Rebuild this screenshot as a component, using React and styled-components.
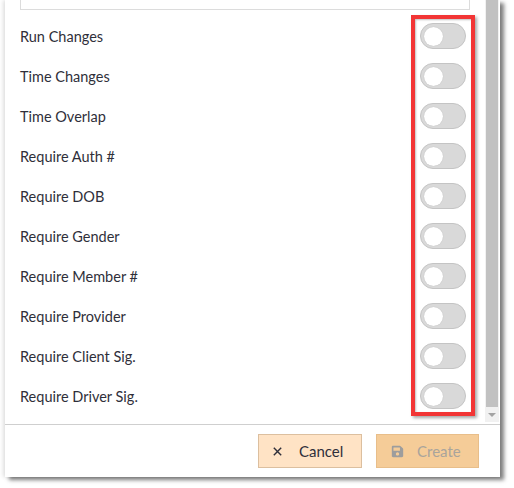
import React from "react";
import styled, { createGlobalStyle } from "styled-components";
import { FaSave } from "react-icons/fa";

const Global = createGlobalStyle`
  html, body { margin: 0; padding: 0; background: #fff; }
  body { font-family: Lato, "Noto Sans", sans-serif; }
`;

const Page = styled.div`
  width: 514px;
  height: 488px;
  padding: 0 14px 11px 5px;
  box-sizing: border-box;
  overflow: hidden;
`;

const Dialog = styled.div`
  position: relative;
  height: 477px;
  background: #fff;
  display: flex;
  flex-direction: column;
  box-shadow: 4px 3px 4px rgba(0, 0, 0, 0.5), -2px 0 4px rgba(0, 0, 0, 0.12);
`;

const Body = styled.div`
  display: flex;
  height: 424px;
  padding-right: 1px;
`;

const List = styled.div`
  flex: 1;
  display: flex;
  flex-direction: column;
`;

const CutInput = styled.div`
  height: 9px;
  margin: 0 15px 6px 15px;
  border: 1px solid #dcdcdc;
  border-top: none;
`;

const Row = styled.div`
  height: 40px;
  display: flex;
  align-items: center;
  justify-content: space-between;
  padding: 0 19px 0 15px;
  font-size: 14.5px;
  color: #2f2f3a;
`;

const Toggle = styled.div`
  width: 46px;
  height: 26px;
  box-sizing: border-box;
  border-radius: 13px;
  background: #d9d9d9;
  border: 1px solid #c4c4c4;
  display: flex;
  align-items: center;
  padding-left: 3px;
`;

const Knob = styled.div`
  width: 19px;
  height: 19px;
  border-radius: 50%;
  background: #fff;
  box-shadow: 0 0 1px rgba(0, 0, 0, 0.2);
`;

const Scrollbar = styled.div`
  width: 14px;
  height: 422px;
  background: #f1f1f1;
  display: flex;
  flex-direction: column;
  align-items: center;
`;

const Thumb = styled.div`
  width: 12px;
  height: 407px;
  background: #c1c1c1;
`;

const Arrow = styled.div`
  margin-top: 6px;
  width: 0;
  height: 0;
  border-left: 4px solid transparent;
  border-right: 4px solid transparent;
  border-top: 4px solid #a3a3a3;
`;

const Footer = styled.div`
  flex: 1;
  border-top: 1px solid #cfcfcf;
  display: flex;
  align-items: center;
  justify-content: flex-end;
  gap: 14px;
  padding: 0 21px 0 0;
`;

const Button = styled.button`
  height: 34px;
  width: ${(p) => p.$w}px;
  box-sizing: border-box;
  display: flex;
  align-items: center;
  justify-content: flex-start;
  gap: ${(p) => p.$gap}px;
  padding: 0 0 0 14px;
  font-family: Lato, "Noto Sans", sans-serif;
  font-size: 15px;
  border: 1px solid ${(p) => (p.$disabled ? "#e8be8a" : "#dcbf9f")};
  background: ${(p) => (p.$disabled ? "#f5cc98" : "#ffe3c5")};
  color: ${(p) => (p.$disabled ? "#a9a49c" : "#2f2f3a")};
`;

const XIcon = () => (
  <svg width="9" height="9" viewBox="0 0 9 9">
    <path d="M0.8 0.8L8.2 8.2M8.2 0.8L0.8 8.2" stroke="#2f2f3a" strokeWidth="1.4" />
  </svg>
);

const Annotation = styled.div`
  position: absolute;
  left: 406px;
  top: 15px;
  width: 64px;
  height: 401px;
  box-sizing: border-box;
  border: 4px solid #f23535;
  box-shadow: 2px 2px 3px rgba(0, 0, 0, 0.35), inset 1px 1px 2px rgba(0, 0, 0, 0.25);
  pointer-events: none;
`;

const items = [
  "Run Changes",
  "Time Changes",
  "Time Overlap",
  "Require Auth #",
  "Require DOB",
  "Require Gender",
  "Require Member #",
  "Require Provider",
  "Require Client Sig.",
  "Require Driver Sig.",
];

export default function App() {
  return (
    <Page>
      <Global />
      <Dialog>
        <Body>
          <List>
            <CutInput />
            {items.map((t) => (
              <Row key={t}>
                <span>{t}</span>
                <Toggle>
                  <Knob />
                </Toggle>
              </Row>
            ))}
          </List>
          <Scrollbar>
            <Thumb />
            <Arrow />
          </Scrollbar>
        </Body>
        <Footer>
          <Button $w={104} $gap={17}>
            <XIcon />
            Cancel
          </Button>
          <Button $w={103} $gap={13} $disabled>
            <FaSave size={13} color="#9d9d9d" />
            Create
          </Button>
        </Footer>
        <Annotation />
      </Dialog>
    </Page>
  );
}
